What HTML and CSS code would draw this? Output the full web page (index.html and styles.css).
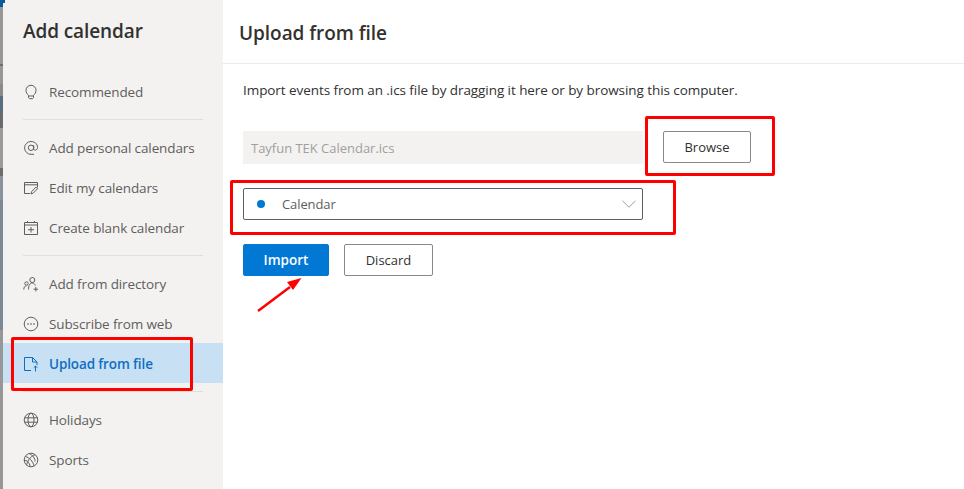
FILE: index.html
```html
<!DOCTYPE html>
<html lang="en">
<head>
<meta charset="utf-8">
<title>Upload from file</title>
<link rel="stylesheet" href="styles.css">
</head>
<body>
<div class="page">
  <div class="backdrop"></div>
  <aside class="side">
    <h1 class="side-title">Add calendar</h1>
    <nav class="nav">
      <a class="item"><svg class="ico" viewBox="0 0 16 16"><path d="M5.500 11.500C4.200 10 3 8.800 3 6.300a5 5 0 0 1 10 0c0 2.500-1.200 3.700-2.500 5.200v2.200l-1 1h-3l-1-1z M5.500 12h5"/></svg><span>Recommended</span></a>
      <div class="sep"></div>
      <a class="item"><svg class="ico" viewBox="0 0 16 16"><circle cx="8" cy="7.800" r="2.700"/><path d="M10.700 5.200v4c0 1.200 2.800 1.700 3.600-.6 1-3.200-1.500-7.100-6.300-7.100a6.300 6.300 0 0 0 0 12.800h3"/></svg><span>Add personal calendars</span></a>
      <a class="item"><svg class="ico" viewBox="0 0 16 16"><path d="M7 13.500H1.500v-11h13v5 M1.500 4.800h13 M8 14l.6-2.500 4.400-4.300 1.600 1.500-4.400 4.400z"/></svg><span>Edit my calendars</span></a>
      <a class="item"><svg class="ico" viewBox="0 0 16 16"><path d="M1.500 2.500h13v12h-13z M1.500 5h13 M4.500 1v2 M11.500 1v2 M8 7v5.500 M5 9.700h6"/></svg><span>Create blank calendar</span></a>
      <div class="sep"></div>
      <a class="item"><svg class="ico" viewBox="0 0 16 16"><circle cx="9.300" cy="4" r="2.500"/><circle cx="3.500" cy="7.500" r="1.700"/><path d="M.8 13.500c0-2.300 1-3.600 2.700-3.600 M5.500 13.500c0-3.800 1.300-6.500 3.800-6.500 1.500 0 2.500 1 3 2.500 M12.800 11v4.500 M10.500 13.200h4.500"/></svg><span>Add from directory</span></a>
      <a class="item"><svg class="ico" viewBox="0 0 16 16"><circle cx="8" cy="8" r="6.800"/><path class="dash" d="M4 8h8"/></svg><span>Subscribe from web</span></a>
      <a class="item item-active"><svg class="ico" viewBox="0 0 16 16"><path d="M8 14.500H1.500v-13h8l4.500 4.500v3 M9.500 1.500V6H14 M12.500 10v5.500 M10.800 11.700l1.700-1.700 1.700 1.700"/></svg><span>Upload from file</span></a>
      <div class="sep sep-tight"></div>
      <a class="item"><svg class="ico" viewBox="0 0 16 16"><circle cx="8" cy="8" r="6.800"/><ellipse cx="8" cy="8" rx="3" ry="6.800"/><path d="M1.500 5.800h13 M1.500 10.200h13"/></svg><span>Holidays</span></a>
      <a class="item"><svg class="ico" viewBox="0 0 16 16"><circle cx="8" cy="8" r="6.800"/><path d="M2.500 4.500C6 5.500 10 9 11 14 M6 1.500c3.500 1.500 6.500 5 6 8 M1.200 8.500c2.500-.5 5.200 1.500 6 6.200 M12 2.800C9 3.500 5 7 3.500 13"/></svg><span>Sports</span></a>
    </nav>
  </aside>
  <main class="main">
    <header class="main-head"><h2 class="main-title">Upload from file</h2></header>
    <section class="body">
      <p class="intro">Import events from an .ics file by dragging it here or by browsing this computer.</p>
      <div class="file-row">
        <div class="file-name">Tayfun TEK Calendar.ics</div>
        <button class="btn btn-browse">Browse</button>
      </div>
      <div class="select">
        <span class="dot"></span>
        <span class="select-text">Calendar</span>
        <svg class="chev" viewBox="0 0 14 8"><path d="M.5.800 7 7.200 13.500.800"/></svg>
      </div>
      <div class="actions">
        <button class="btn btn-primary">Import</button>
        <button class="btn btn-discard">Discard</button>
      </div>
    </section>
  </main>
  <div class="mark mark-browse"></div>
  <div class="mark mark-select"></div>
  <div class="mark mark-upload"></div>
  <svg class="arrow" viewBox="0 0 50 40"><path class="arrow-line" d="M1 36 33 12"/><path class="arrow-head" d="M44.500 3 30 7l6 8z"/></svg>
</div>
</body>
</html>
```
FILE: styles.css
```css
* { box-sizing: border-box; }
html, body { margin: 0; height: 100%; }
body { overflow: hidden; background: #fff; font-family: "Open Sans", "Noto Sans", sans-serif; color: #323130; }
.page { position: relative; display: flex; width: 964px; height: 489px; overflow: hidden; padding-left: 3px; }
.backdrop { position: absolute; left: 0; top: 0; width: 3px; height: 489px; background: linear-gradient(#0b5a9c 0 7px, #979797 7px 64px, #6b6f73 64px 66px, #979797 66px 84px, #8a8a8a 84px 96px, #5c6c80 96px 114px, #6a6a6a 114px 128px, #9a9a9a 128px 168px, #6d6d6d 168px 176px, #8a939b 176px 200px, #7c8a96 200px 330px, #979797 330px); }
.side { position: relative; width: 220px; flex: none; background: #f3f2f1; padding-top: 19px; }
.side::before { content: ""; position: absolute; left: 0; top: 0; width: 2px; height: 3px; background: #0b5a9c; }
.side-title { margin: 0 0 0 20px; font-size: 19px; line-height: 24px; font-weight: 600; color: #323130; letter-spacing: -.1px; }
.nav { display: flex; flex-direction: column; margin-top: 29px; }
.item { display: flex; align-items: center; height: 40px; padding-left: 20px; font-size: 13.500px; letter-spacing: -.12px; color: #605e5c; }
.ico { width: 16px; height: 16px; margin-right: 10px; flex: none; fill: none; stroke: #605e5c; stroke-width: 1; }
.dash { stroke-dasharray: 2 1; }
.item-active { margin-top: -1px; padding-top: 2px; background: #c7e0f4; color: #106ebe; font-weight: 600; }
.item-active .ico { stroke: #106ebe; }
.sep { height: 1px; margin: 7px 20px 8px; background: #e1dfdd; }
.sep-tight { margin: 8px 20px 8px; }
.main { flex: 1; display: flex; flex-direction: column; }
.main-head { height: 64px; border-bottom: 1px solid #edebe9; padding: 21px 0 0 16px; }
.main-title { margin: 0; font-size: 19px; line-height: 24px; font-weight: 600; letter-spacing: -.05px; color: #323130; }
.body { padding: 16px 0 0 20px; }
.intro { margin: 0; font-size: 13.500px; line-height: 20px; letter-spacing: -.07px; color: #323130; }
.file-row { display: flex; align-items: flex-start; gap: 20px; margin-top: 31px; }
.file-name { width: 400px; height: 33px; padding-left: 8px; background: #f3f2f1; color: #a19f9d; font-size: 13px; letter-spacing: -.02px; line-height: 35px; }
.btn { height: 32px; border-radius: 2px; font-family: inherit; font-size: 13px; font-weight: 500; padding: 0; background: #fff; color: #323130; border: 1px solid #8a8886; }
.btn-browse { width: 88px; }
.select { display: flex; align-items: center; width: 400px; height: 32px; margin-top: 24px; border: 1px solid #605e5c; border-radius: 2px; padding: 0 6px 0 13px; font-size: 13px; letter-spacing: -.1px; color: #605e5c; }
.dot { width: 8px; height: 8px; border-radius: 50%; background: #0078d4; }
.select-text { flex: 1; margin-left: 17px; }
.chev { width: 14px; height: 8px; fill: none; stroke: #a19f9d; stroke-width: 1; }
.actions { display: flex; gap: 15px; margin-top: 24px; }
.btn-primary { width: 86px; background: #0078d4; border-color: #0078d4; color: #fff; font-weight: 600; font-size: 13.500px; }
.btn-discard { width: 89px; }
.mark { position: absolute; border: 3px solid #f00; border-radius: 2px; }
.mark-browse { left: 645px; top: 116px; width: 130px; height: 60px; }
.mark-select { left: 230px; top: 180px; width: 446px; height: 55px; }
.mark-upload { left: 11px; top: 337px; width: 182px; height: 54px; }
.arrow { position: absolute; left: 257px; top: 275px; width: 50px; height: 40px; }
.arrow-line { stroke: #f00; stroke-width: 2.500; fill: none; }
.arrow-head { fill: #f00; }
```
